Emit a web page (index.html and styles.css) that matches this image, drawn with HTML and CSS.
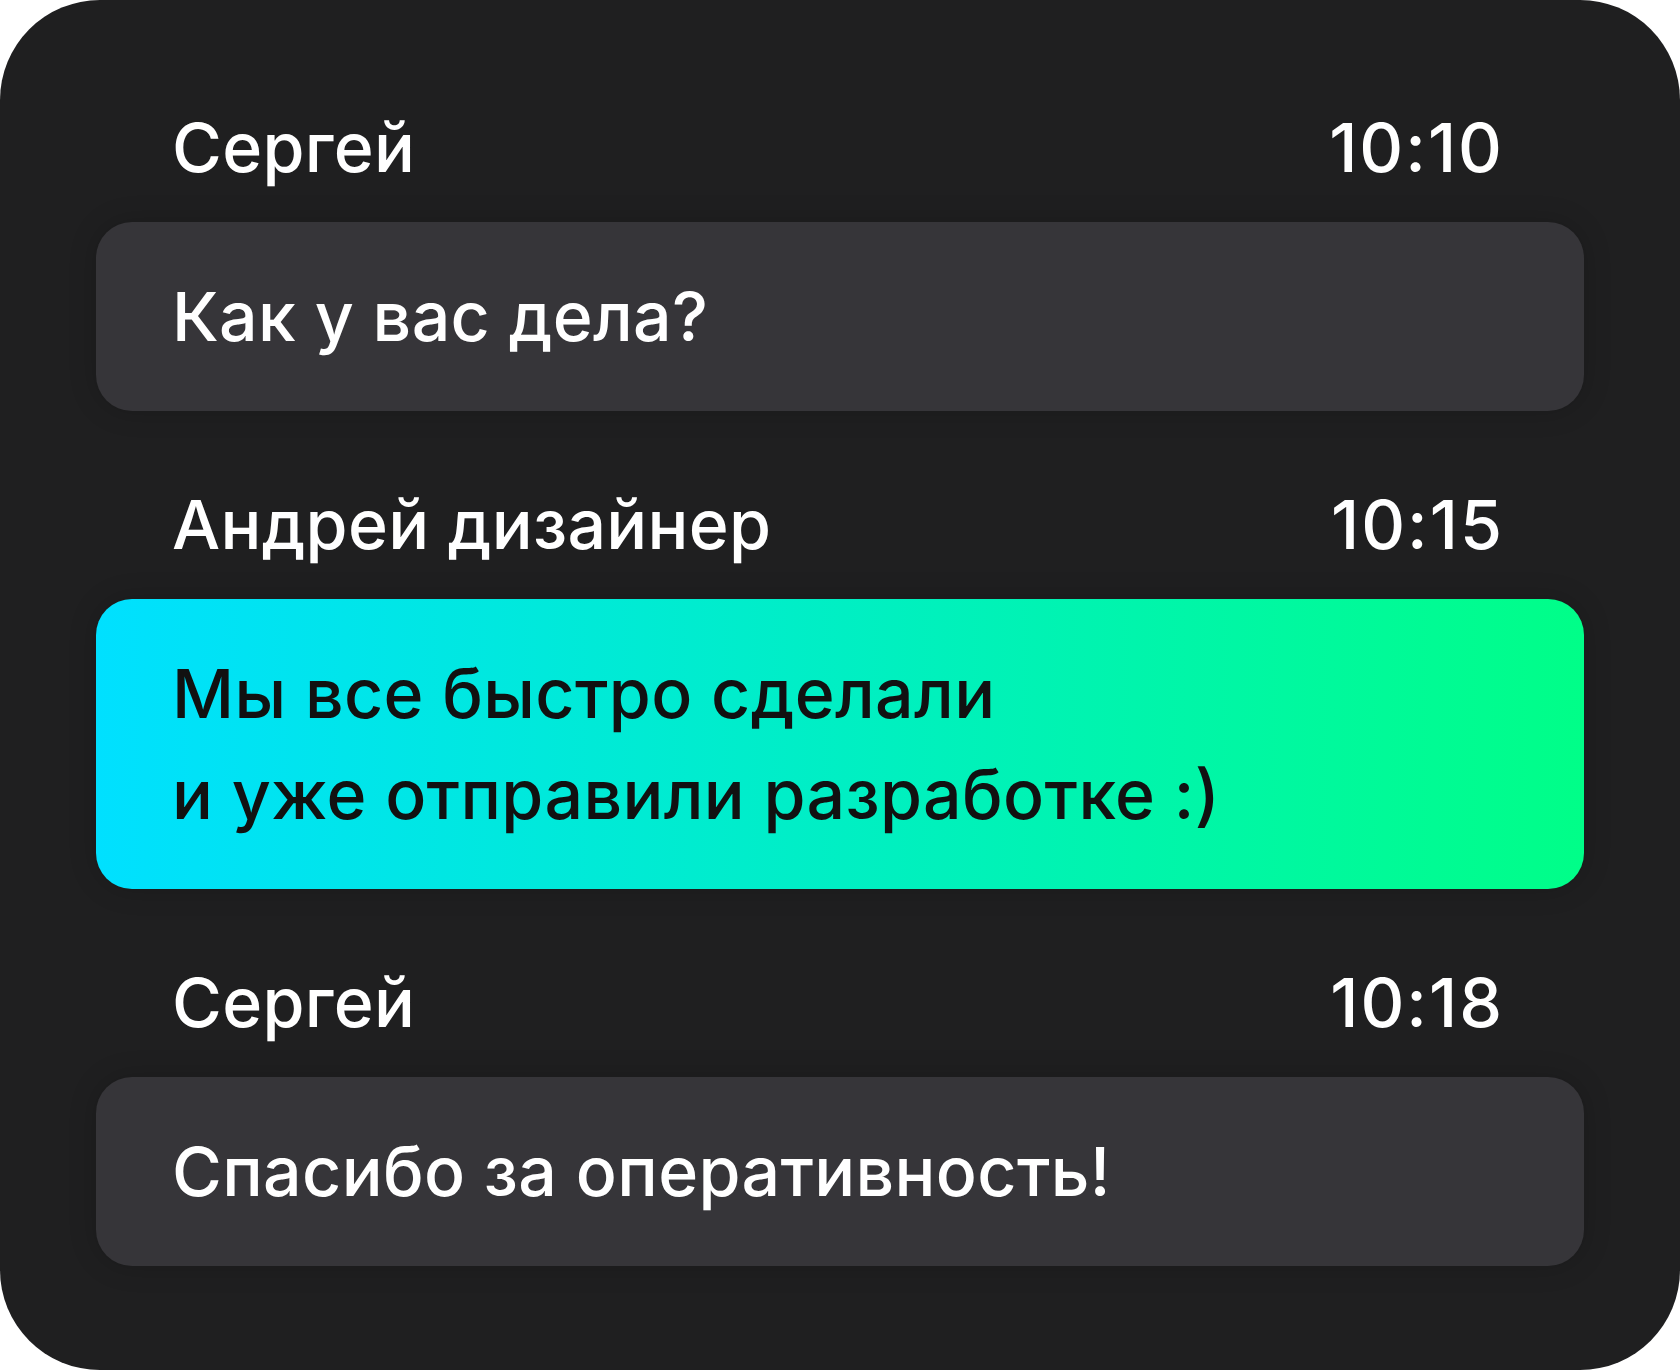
FILE: index.html
```html
<!DOCTYPE html>
<html lang="ru">
<head>
<meta charset="utf-8">
<title>Чат</title>
<link rel="stylesheet" href="styles.css">
</head>
<body>
<div class="card">
  <div class="msg">
    <div class="meta"><span class="name">Сергей</span><span class="time">10:10</span></div>
    <div class="bubble">Как у вас дела?</div>
  </div>
  <div class="msg">
    <div class="meta"><span class="name">Андрей дизайнер</span><span class="time">10:15</span></div>
    <div class="bubble bubble-accent">Мы все быстро сделали<br>и уже отправили разработке :)</div>
  </div>
  <div class="msg">
    <div class="meta"><span class="name">Сергей</span><span class="time">10:18</span></div>
    <div class="bubble">Спасибо за оперативность!</div>
  </div>
</div>
</body>
</html>
```
FILE: styles.css
```css
html, body {
  margin: 0;
  padding: 0;
  background: #ffffff;
}
body {
  width: 1680px;
  height: 1370px;
  font-family: Inter, "Noto Sans", sans-serif;
}
.card {
  box-sizing: border-box;
  width: 1680px;
  height: 1370px;
  background: #1f1f20;
  border-radius: 100px;
  padding: 106px 96px 0 96px;
  display: flex;
  flex-direction: column;
  gap: 72px;
}
.msg {
  display: flex;
  flex-direction: column;
  gap: 34px;
}
.meta {
  display: flex;
  justify-content: space-between;
  align-items: baseline;
  padding: 0 82px 0 76px;
  font-size: 68px;
  font-weight: 500;
  line-height: 82px;
  letter-spacing: 0.3px;
  color: #ffffff;
}
.time {
  letter-spacing: 2px;
  margin-right: -2px;
}
.bubble {
  background: #363539;
  border-radius: 36px;
  padding: 44px 76px;
  font-size: 68px;
  font-weight: 500;
  line-height: 101px;
  letter-spacing: 0.35px;
  color: #ffffff;
  box-shadow: 0 0 28px rgba(0, 0, 0, 0.18);
}
.bubble-accent {
  background: linear-gradient(90deg, #00e0ff 0%, #00fe88 100%);
  color: #111111;
}
```
